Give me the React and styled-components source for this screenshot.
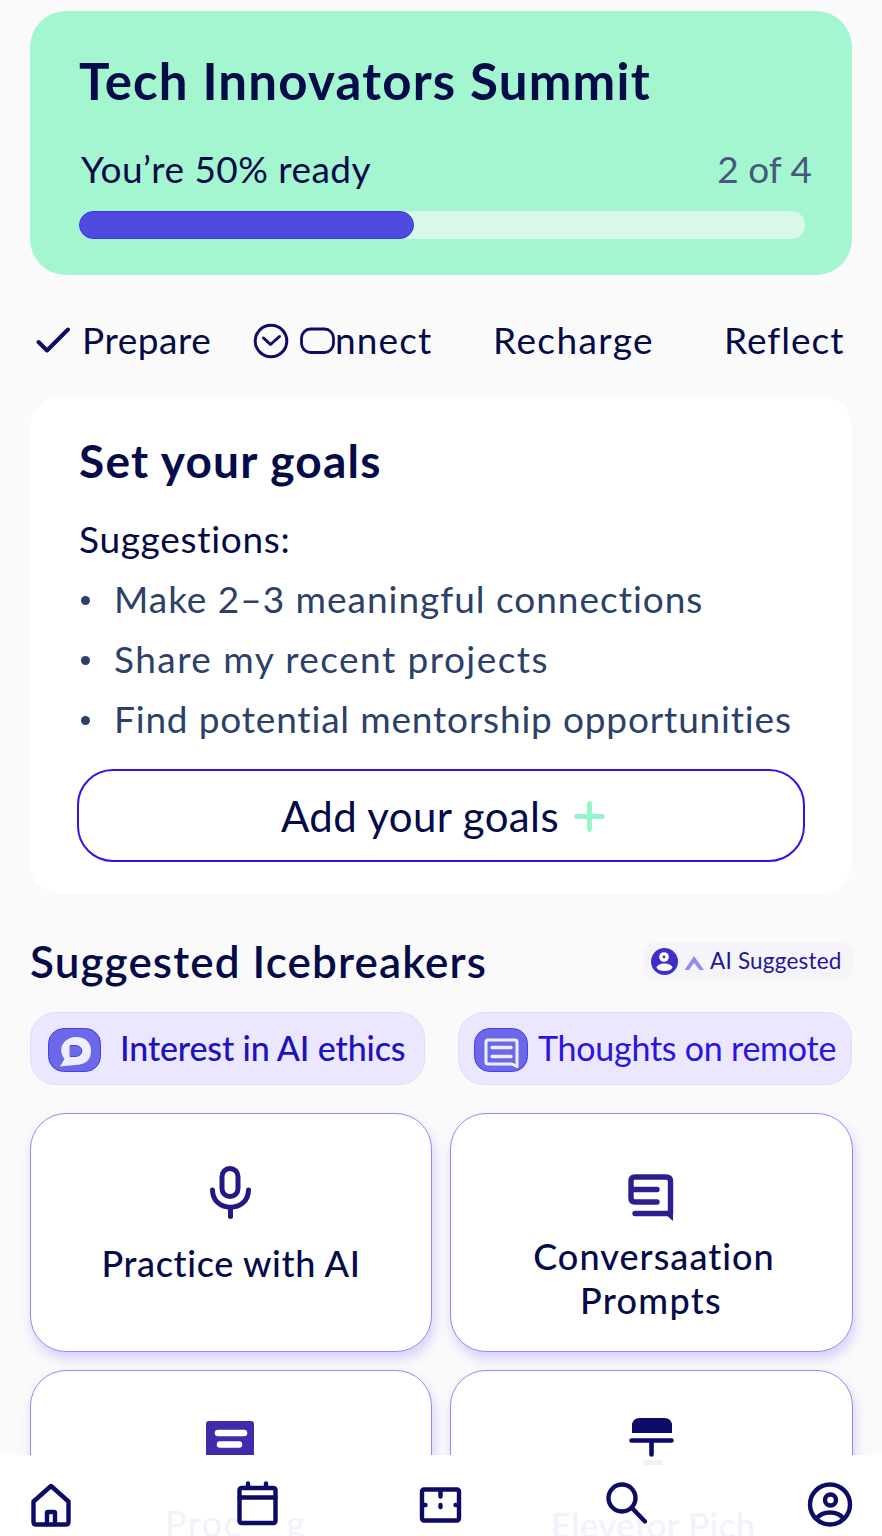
import styled, { createGlobalStyle } from "styled-components";

const GlobalStyle = createGlobalStyle`
  * {
    box-sizing: border-box;
  }
  body {
    margin: 0;
    background: #fafafa;
    font-family: Lato, "Open Sans", sans-serif;
    font-variant-ligatures: none;
    color: #040b48;
  }
  h1, h2, p, ul {
    margin: 0;
    padding: 0;
    font-weight: inherit;
  }
  button {
    font-family: inherit;
    color: inherit;
  }
  svg {
    display: block;
    flex: none;
    overflow: visible;
  }
`;

const Screen = styled.main`
  position: relative;
  width: 882px;
  height: 1536px;
  padding: 11px 29px 0 30px;
  overflow: hidden;
`;

const Text = styled.span`
  font-size: ${(p) => p.$size || 37}px;
  font-weight: ${(p) => p.$weight || 400};
  line-height: ${(p) => p.$line || 48}px;
  letter-spacing: ${(p) => p.$track || 0}px;
  margin-left: ${(p) => p.$nudge || 0}px;
  padding-bottom: ${(p) => p.$lift || 0}px;
  color: ${(p) => p.$color || "inherit"};
  white-space: nowrap;
`;

const Summary = styled.section`
  width: 822px;
  height: 264px;
  padding: 40px 47px 0 49px;
  border-radius: 36px;
  background: #a3f6cf;
  display: flex;
  flex-direction: column;
`;

const SummaryRow = styled.div`
  display: flex;
  justify-content: space-between;
  margin: 34px -7px 18px 2px;
`;

const Track = styled.div`
  height: 28px;
  border-radius: 14px;
  background: #d8f8ea;
`;

const Fill = styled.div`
  height: 100%;
  border: 1px solid #4036e0;
  border-radius: 14px;
  background: #4f4be0;
`;

const Tabs = styled.nav`
  display: grid;
  grid-template-columns: 217px 240px 231px 1fr;
  margin: 42px 0 31px;
  padding-left: 6px;
`;

const Tab = styled.div`
  display: flex;
  align-items: center;
  gap: ${(p) => p.$gap || 0}px;
`;

const Goals = styled.section`
  width: 822px;
  height: 498px;
  padding: 37px 47px 0 49px;
  border-radius: 32px;
  background: #fff;
  display: flex;
  flex-direction: column;
  align-items: flex-start;
`;

const Lead = styled.p`
  display: flex;
  padding-top: 26px;
`;

const GoalList = styled.ul`
  padding: 7px 0 19px;
  list-style: none;
`;

const Goal = styled.li`
  display: flex;
  align-items: center;
  gap: 24px;
  padding-left: 2px;
  color: #2b4169;
  &::before {
    content: "";
    width: 9px;
    height: 9px;
    border-radius: 50%;
    background: #2b4169;
  }
`;

const AddButton = styled.button`
  width: 728px;
  height: 93px;
  margin-left: -2px;
  padding: 0 0 0 4px;
  border: 2px solid #3510e8;
  border-radius: 36px;
  background: #fff;
  display: flex;
  align-items: center;
  justify-content: center;
  gap: 14px;
`;

const SectionHead = styled.div`
  display: flex;
  align-items: center;
  justify-content: space-between;
  height: 56px;
  margin: 39px 0 23px;
`;

const Badge = styled.div`
  display: flex;
  align-items: center;
  width: 209px;
  height: 38px;
  padding-left: 7px;
  border-radius: 12px;
  background: #f5f4fb;
`;

const Chips = styled.div`
  display: grid;
  grid-template-columns: 395px 394px;
  gap: 33px;
`;

const Chip = styled.div`
  display: flex;
  align-items: center;
  gap: ${(p) => p.$gap}px;
  height: 73px;
  padding: 2px 0 0 ${(p) => p.$left}px;
  border: 1px solid #e0dcfd;
  border-radius: 26px;
  background: #eae7fe;
`;

const Cards = styled.div`
  display: grid;
  grid-template-columns: 402px 403px;
  gap: 18px;
  margin-top: 28px;
`;

const Card = styled.div`
  display: flex;
  flex-direction: column;
  align-items: center;
  height: 239px;
  padding: ${(p) => p.$top}px 2px 0 0;
  border: 1px solid #9a86f8;
  border-radius: 36px;
  background: #fff;
  box-shadow: 2px 7px 12px rgba(104, 80, 245, 0.24);
`;

const CardLabel = styled.div`
  display: flex;
  flex-direction: column;
  align-items: center;
  margin-top: ${(p) => p.$gap}px;
`;

// sits above the bar but under its icons
const FadedLabel = styled.div`
  position: relative;
  z-index: 2;
  display: flex;
  gap: ${(p) => p.$space || 0}px;
  margin-top: ${(p) => p.$gap}px;
`;

const Lectern = styled.svg`
  position: relative;
  z-index: 2;
`;

const BarBack = styled.div`
  position: absolute;
  z-index: 1;
  left: 0;
  right: 0;
  bottom: 0;
  height: 81px;
  background: #fff;
`;

const BottomBar = styled.nav`
  position: absolute;
  z-index: 3;
  left: 0;
  right: 0;
  bottom: 0;
  height: 81px;
  padding: 25px 0 0 30px;
  display: grid;
  grid-template-columns: 207px 182px 187px 201px auto;
`;

const Icon = ({ w, h, stroke = "#0c0b66", width = 4, children }) => (
  <svg
    width={w}
    height={h}
    viewBox={`0 0 ${w} ${h}`}
    fill="none"
    stroke={stroke}
    strokeWidth={width}
    strokeLinecap="round"
    strokeLinejoin="round"
  >
    {children}
  </svg>
);

const goals = [
  { text: "Make 2–3 meaningful connections", track: 0.98 },
  { text: "Share my recent projects", track: 1.45 },
  { text: "Find potential mentorship opportunities", track: 0.83 },
];

const App = () => {
  const done = 335;
  const total = 726;

  return (
    <Screen>
      <GlobalStyle />
      <Summary>
        <Text as="h1" $size={51} $weight={700} $line={60} $track={1.2}>Tech Innovators Summit</Text>
        <SummaryRow>
          <Text $track={0.45}>You’re 50% ready</Text>
          <Text $color="#46587c">2 of 4</Text>
        </SummaryRow>
        <Track>
          <Fill style={{ width: `${(done / total) * 100}%` }} />
        </Track>
      </Summary>

      <Tabs>
        <Tab $gap={12}>
          <Icon w={34} h={28}><path d="M2.500 15L11 23.500L32 2.500" /></Icon>
          <Text $line={46} $lift={2} $track={0.55}>Prepare</Text>
        </Tab>
        <Tab $gap={11}>
          <Icon w={36} h={36} width={3}>
            <circle cx="18" cy="18" r="15.800" />
            <path d="M10.500 15L17.500 21.500L26.500 13.500" />
          </Icon>
          <Tab>
            <Icon w={35} h={26} width={2.8}><rect x="1.500" y="1" width="32" height="23.500" rx="9" /></Icon>
            <Text $line={46} $lift={2} $track={1.1}>nnect</Text>
          </Tab>
        </Tab>
        <Tab><Text $line={46} $lift={2} $track={1.4}>Recharge</Text></Tab>
        <Tab><Text $line={46} $lift={2} $track={1}>Reflect</Text></Tab>
      </Tabs>

      <Goals>
        <Text as="h2" $size={46} $weight={700} $line={56} $track={1.25}>Set your goals</Text>
        <Lead><Text $track={0.7}>Suggestions:</Text></Lead>
        <GoalList>
          {goals.map((goal) => (
            <Goal key={goal.text}>
              <Text $line={58} $lift={2} $track={goal.track}>{goal.text}</Text>
            </Goal>
          ))}
        </GoalList>
        <AddButton type="button">
          <Text $size={42} $track={0.4}>Add your goals</Text>
          <Icon w={32} h={32} width={4.8} stroke="#96f4c8"><path d="M16.500 3.500V29.500M3.500 16.500H29.500" /></Icon>
        </AddButton>
      </Goals>

      <SectionHead>
        <Text as="h2" $size={44} $weight={600} $line={56} $track={1.1}>Suggested Icebreakers</Text>
        <Badge>
          <Icon w={27} h={27} stroke="none">
            <circle cx="13.500" cy="13.500" r="13.500" fill="#3c30c8" />
            <circle cx="13" cy="9" r="4.800" fill="#fff" />
            <circle cx="13" cy="9" r="1.400" fill="#3c30c8" />
            <ellipse cx="13.500" cy="19.300" rx="7.800" ry="3.700" fill="#fff" />
          </Icon>
          <svg width="32" height="20" viewBox="0 0 32 20">
            <path d="M6.500 19L16 5L26 19H21.500L16 12L11 19Z" fill="#948cf3" />
          </svg>
          <Text $size={22.5} $color="#22169c" $line={38} $track={0.2}>AI Suggested</Text>
        </Badge>
      </SectionHead>

      <Chips>
        <Chip $left={17} $gap={19}>
          <Icon w={53} h={44} stroke="none" width={1}>
            <rect x="0.500" y="0.500" width="52" height="43" rx="15" fill="#6c68ea" stroke="#4a3ee6" />
            <path d="M12 38.500L16.500 31C8 19 18 9 28 9C38 9 43 15 43 23C43 32 37 37 27 37Z" fill="#f0edff" />
            <path d="M22.500 17.500H27C36 17.500 36 28.500 27 28.500H22.500Z" fill="#6c68ea" stroke="#4a3ee6" />
          </Icon>
          <Text $size={34} $line={46} $lift={4} $weight={500} $color="#1d12bb" $track={-0.15}>Interest in AI ethics</Text>
        </Chip>
        <Chip $left={15} $gap={10}>
          <Icon w={54} h={44} stroke="none" width={1}>
            <rect x="0.500" y="0.500" width="53" height="43" rx="15" fill="#6c68ea" stroke="#4a3ee6" />
            <path d="M43 38.500L38 36H14Q12 36 12 34V14Q12 12 14 12H41Q43 12 43 14Z" fill="#6c68ea" stroke="#f0edff" strokeWidth="3" />
            <path d="M18 19.500H37M18 28.500H37" stroke="#f0edff" strokeWidth="3.400" />
          </Icon>
          <Text $size={34} $line={46} $lift={4} $color="#2a14e0" $track={-0.25}>Thoughts on remote</Text>
        </Chip>
      </Chips>

      <Cards>
        <Card $top={52}>
          <Icon w={42} h={54} stroke="#211a84" width={5}>
            <rect x="13" y="2.500" width="16" height="28" rx="8" />
            <path d="M3.500 24C3.500 47 39.500 47 39.500 24M21.500 42.500V50.500" />
          </Icon>
          <CardLabel $gap={21}>
            <Text $size={36} $line={44} $weight={500} $track={0.65} $nudge={2}>Practice with AI</Text>
          </CardLabel>
        </Card>
        <Card $top={60}>
          <Icon w={46} h={48} stroke="#2b2090" width={5.4}>
            <path d="M29 28H7Q3 28 3 24V7Q3 3 7 3H38Q42.500 3 42.500 7V39.500H7M6 15.500H29" />
            <path d="M37 40L45 47V38Z" fill="#2b2090" stroke="none" />
          </Icon>
          <CardLabel $gap={12}>
            <Text $size={36} $line={44} $weight={500} $track={1.05} $nudge={7}>Conversaation</Text>
            <Text $size={36} $line={44} $weight={500} $track={1.3} $nudge={1}>Prompts</Text>
          </CardLabel>
        </Card>
        <Card $top={50}>
          <Icon w={48} h={48} stroke="none">
            <rect width="48" height="48" rx="3" fill="#3e2cab" />
            <path d="M12 12H38M14 23.500H33" stroke="#fff" strokeWidth="6.500" />
          </Icon>
          <FadedLabel $gap={32} $space={44}>
            <Text $size={36} $line={44} $track={1.5} $nudge={10} $color="#f3f2fa">Proc</Text>
            <Text $size={36} $line={44} $color="#f3f2fa">g</Text>
          </FadedLabel>
        </Card>
        <Card $top={47}>
          <Lectern width="45" height="48" viewBox="0 0 45 48">
            <path d="M4 15V8Q4 0 12 0H36Q44 0 44 8V15Z" fill="#0c0b66" />
            <path d="M3.500 22.500H43.500M23.500 22.500V36.500" stroke="#0c0b66" strokeWidth="4.600" strokeLinecap="round" />
            <rect x="15" y="42" width="20" height="5" rx="2.500" fill="#f1f0f7" />
          </Lectern>
          <FadedLabel $gap={36}>
            <Text $size={35} $line={44} $weight={600} $track={0.2} $nudge={5} $color="#f3f2fa">Elevefor Pich</Text>
          </FadedLabel>
        </Card>
      </Cards>

      <BarBack />
      <BottomBar>
        <Icon w={41} h={46} width={4.4}>
          <path d="M3.500 21.500L21 6L38.500 21.500V42Q38.500 44.500 36 44.500H6Q3.500 44.500 3.500 42Z" />
          <path d="M17 44V33Q17 32 18 32H24Q25 32 25 33V44" />
        </Icon>
        <Icon w={41} h={46} width={4.4}>
          <rect x="2.500" y="8" width="36" height="35" rx="2" />
          <path d="M2.500 17.500H38.500M11 3.500V7M29 3.500V7" />
        </Icon>
        <Icon w={42} h={46} width={4.4}>
          <rect x="3" y="9.500" width="37" height="31" rx="2" />
          <path d="M4 25H6.500M36.500 25H39M21.500 11V16.500M21.500 25V27" />
        </Icon>
        <Icon w={42} h={46} width={4.4}>
          <circle cx="16" cy="18" r="13.500" />
          <path d="M26 28L39 41.500" />
        </Icon>
        <Icon w={45} h={46} width={4.4}>
          <circle cx="23" cy="24.500" r="20" />
          <circle cx="23.500" cy="20" r="5.500" />
          <path d="M9.500 38.500C15.500 30.500 30.500 30.500 36.500 38.500" />
        </Icon>
      </BottomBar>
    </Screen>
  );
};

export default App;
